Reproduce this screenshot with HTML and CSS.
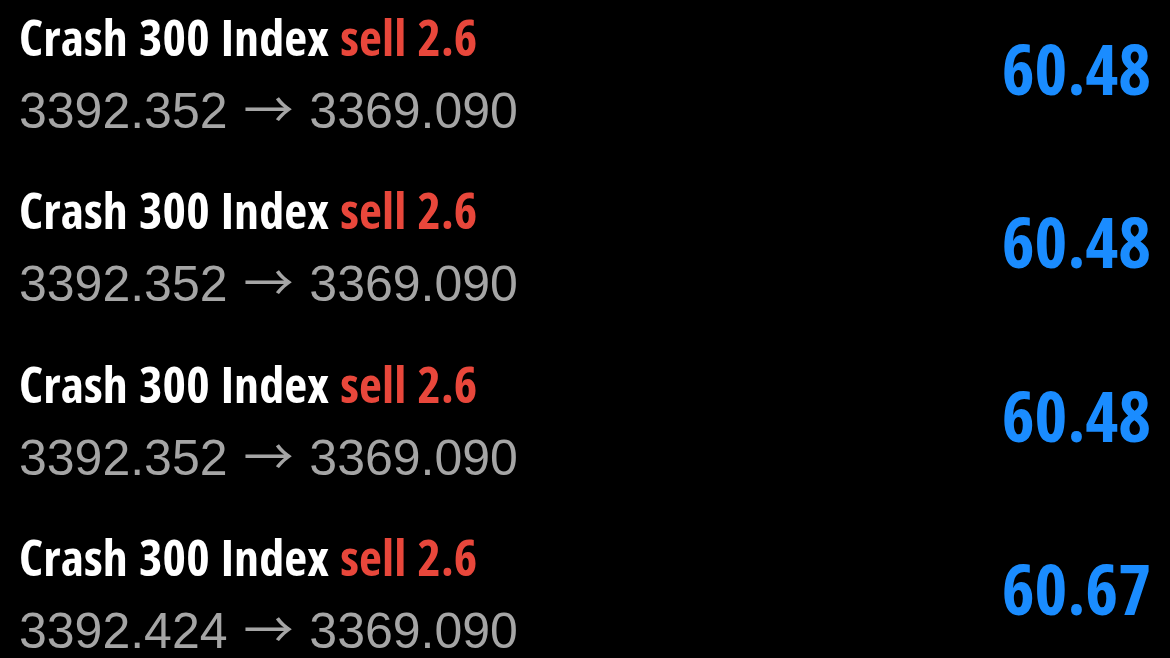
FILE: index.html
```html
<!DOCTYPE html>
<html lang="en">
<head>
  <meta charset="UTF-8" />
  <meta name="viewport" content="width=device-width, initial-scale=1.0" />
  <title>Trades</title>
  <link rel="stylesheet" href="styles.css">
</head>
<body>
  <div class="trades">
    <div class="trade">
      <div class="info">
        <div class="title">Crash 300 Index <span class="side">sell 2.6</span></div>
        <div class="prices">3392.352 <span class="arrow">&rarr;</span> 3369.090</div>
      </div>
      <div class="profit">60.48</div>
    </div>
    <div class="trade">
      <div class="info">
        <div class="title">Crash 300 Index <span class="side">sell 2.6</span></div>
        <div class="prices">3392.352 <span class="arrow">&rarr;</span> 3369.090</div>
      </div>
      <div class="profit">60.48</div>
    </div>
    <div class="trade">
      <div class="info">
        <div class="title">Crash 300 Index <span class="side">sell 2.6</span></div>
        <div class="prices">3392.352 <span class="arrow">&rarr;</span> 3369.090</div>
      </div>
      <div class="profit">60.48</div>
    </div>
    <div class="trade">
      <div class="info">
        <div class="title">Crash 300 Index <span class="side">sell 2.6</span></div>
        <div class="prices">3392.424 <span class="arrow">&rarr;</span> 3369.090</div>
      </div>
      <div class="profit">60.67</div>
    </div>
  </div>
</body>
</html>
```

FILE: styles.css
```css
body {
  margin: 0;
  background: #000;
  color: #fff;
  font-family: "Liberation Sans", Arial, sans-serif;
  overflow: hidden;
}
.trades {
  padding: 7px 19px 0 19px;
}
.trade {
  display: flex;
  justify-content: space-between;
  align-items: flex-start;
  height: 173.4px;
}
.title {
  font-family: "Open Sans", sans-serif;
  font-stretch: 75%;
  font-weight: 700;
  font-size: 50px;
  line-height: 60px;
  letter-spacing: 0.1px;
  word-spacing: 2px;
  white-space: nowrap;
}
.side {
  color: #e8473b;
}
.prices {
  color: #a5a5a5;
  font-size: 50px;
  line-height: 88px;
  white-space: nowrap;
}
.arrow {
  font-family: "Noto Sans CJK JP", sans-serif;
  line-height: 1;
  margin: 0 2px;
}
.profit {
  font-family: "Open Sans", sans-serif;
  font-stretch: 75%;
  font-weight: 700;
  font-size: 70px;
  line-height: 70px;
  margin-top: 26px;
  color: #1a8cff;
}
```
